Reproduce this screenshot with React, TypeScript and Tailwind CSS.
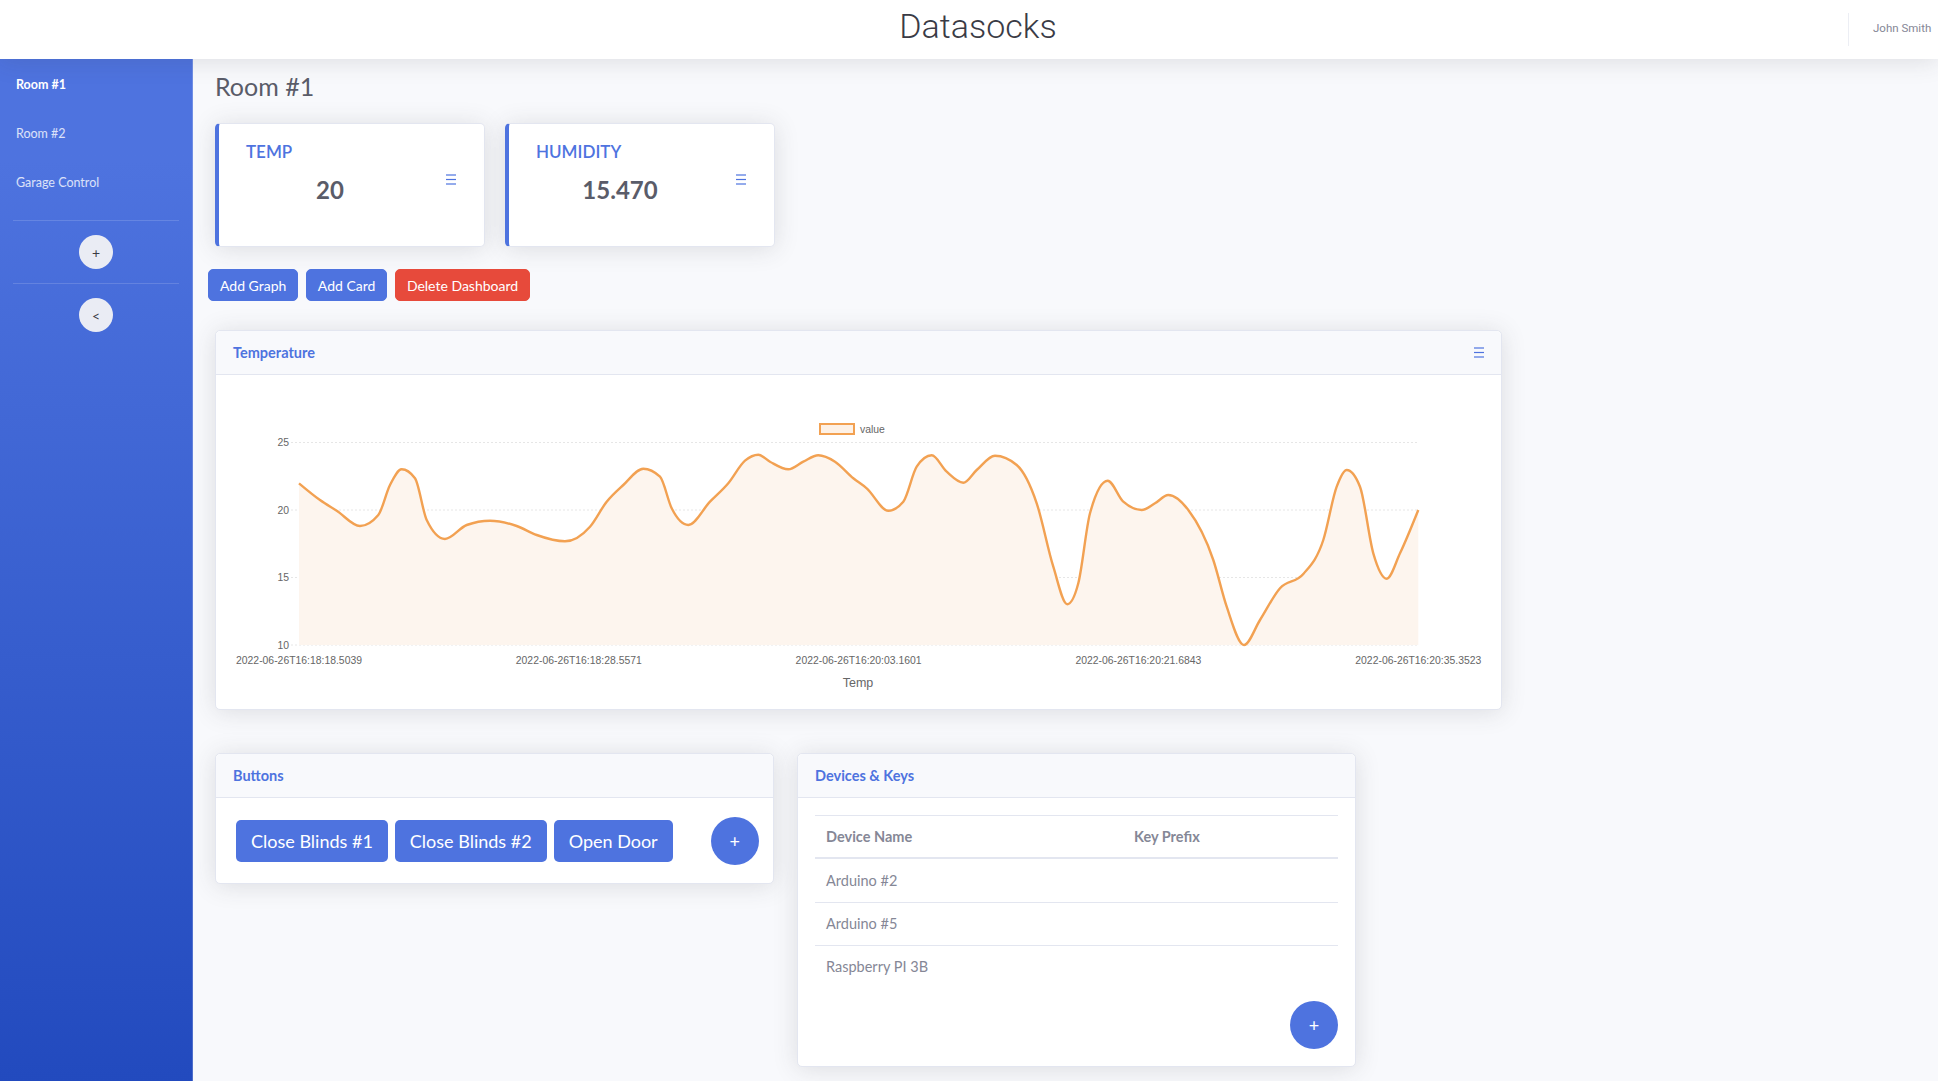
import React from "react";

const pts: [number, number][] = [
  [299, 483.3], [320, 500], [336.7, 510.7], [360, 526], [378.3, 515], [390, 485], [401.7, 469.3], [415, 478.3],
  [426.7, 520], [445, 539], [466.7, 525], [490, 520.7], [516.7, 526], [536.7, 535], [565, 541.3], [590, 526.7],
  [606.7, 501.7], [623.3, 485], [643.3, 468.7], [660, 476.7], [671.7, 508.3], [688.3, 525], [710, 501.7],
  [728.3, 483.3], [745, 460.7], [758.3, 454.7], [770, 461.7], [788.3, 469.3], [803.3, 461.7], [818.3, 455.3],
  [835, 461.7], [853.3, 478.3], [866.7, 488.3], [888.3, 510.7], [903.3, 501.7], [916.7, 466.7], [931.7, 455.3],
  [946.7, 471.7], [963.3, 482.7], [976.7, 470], [995, 455.7], [1016.7, 465], [1036.7, 503.3], [1053.3, 566.7],
  [1067.3, 604.3], [1078.3, 583.3], [1090, 513.3], [1107.7, 480.7], [1123.3, 501.7], [1141.7, 510], [1155, 503.3],
  [1168.3, 495], [1188.3, 510], [1213.3, 560], [1226.7, 606.7], [1244, 645], [1260, 620], [1280, 588.3],
  [1303.3, 574], [1323.3, 540], [1336.7, 486.7], [1346.7, 470], [1360, 486.7], [1373.3, 553.3], [1386.7, 578.7],
  [1400, 553.3], [1418.3, 510],
];

function monotonePath(p: [number, number][]) {
  const n = p.length;
  const t = new Array(n).fill(0);
  for (let i = 1; i < n - 1; i++) {
    const [x0, y0] = p[i - 1];
    const [x1, y1] = p[i];
    const [x2, y2] = p[i + 1];
    const h0 = x1 - x0;
    const h1 = x2 - x1;
    const s0 = (y1 - y0) / h0;
    const s1 = (y2 - y1) / h1;
    const pp = (s0 * h1 + s1 * h0) / (h0 + h1);
    t[i] = (Math.sign(s0) + Math.sign(s1)) * Math.min(Math.abs(s0), Math.abs(s1), 0.5 * Math.abs(pp)) || 0;
  }
  const h = p[1][0] - p[0][0];
  t[0] = (3 * (p[1][1] - p[0][1]) / h - t[1]) / 2;
  const hn = p[n - 1][0] - p[n - 2][0];
  t[n - 1] = (3 * (p[n - 1][1] - p[n - 2][1]) / hn - t[n - 2]) / 2;
  let d = `M${p[0][0]},${p[0][1]}`;
  for (let i = 0; i < n - 1; i++) {
    const [x0, y0] = p[i];
    const [x1, y1] = p[i + 1];
    const dx = (x1 - x0) / 3;
    d += ` C${(x0 + dx).toFixed(2)},${(y0 + dx * t[i]).toFixed(2)} ${(x1 - dx).toFixed(2)},${(y1 - dx * t[i + 1]).toFixed(2)} ${x1},${y1}`;
  }
  return d;
}

const linePath = monotonePath(pts);
const areaPath = `${linePath} L1418.3,645 L299,645 Z`;

function Burger({ className = "" }: { className?: string }) {
  return (
    <svg width="10" height="11" viewBox="0 0 10 11" className={className}>
      <line x1="0" y1="1" x2="10" y2="1" stroke="#4e73df" strokeWidth="1.2" />
      <line x1="0" y1="5.5" x2="10" y2="5.5" stroke="#4e73df" strokeWidth="1.2" />
      <line x1="0" y1="10" x2="10" y2="10" stroke="#4e73df" strokeWidth="1.2" />
    </svg>
  );
}

function StatCard({ title, value }: { title: string; value: string }) {
  return (
    <div className="w-[270px] h-[124px] bg-white rounded-[5px] border border-[#e3e6f0] border-l-4 border-l-[#4e73df] shadow-[0_2px_24px_0_rgba(58,59,69,0.15)] flex pl-[27px]">
      <div className="w-[168px] pt-[18px]">
        <div className="text-[17px] leading-[20px] font-semibold text-[#4e73df]">{title}</div>
        <div className="mt-[13px] text-center text-[24px] leading-[29px] font-bold text-[#5a5c69]">{value}</div>
      </div>
      <div className="ml-[32px] mt-[50px]">
        <Burger />
      </div>
    </div>
  );
}

const xLabels = [
  { x: 299, t: "2022-06-26T16:18:18.5039" },
  { x: 578.8, t: "2022-06-26T16:18:28.5571" },
  { x: 858.6, t: "2022-06-26T16:20:03.1601" },
  { x: 1138.4, t: "2022-06-26T16:20:21.6843" },
  { x: 1418.3, t: "2022-06-26T16:20:35.3523" },
];
const grid = [
  { y: 442.5, t: "25" },
  { y: 510, t: "20" },
  { y: 577.5, t: "15" },
  { y: 645, t: "10" },
];

function Chart() {
  return (
    <svg width="1285" height="334" viewBox="216 375 1285 334" className="block" style={{ fontFamily: "'Liberation Sans', Arial, sans-serif" }}>
      {grid.map((g) => (
        <line key={g.y} x1="291" y1={g.y} x2="1418.3" y2={g.y} stroke="#e6e6e6" strokeWidth="1" strokeDasharray="2 2" />
      ))}
      <path d={areaPath} fill="#fdf5ee" />
      <path d={linePath} fill="none" stroke="#f2a152" strokeWidth="2.4" strokeLinejoin="round" />
      {grid.map((g) => (
        <text key={g.t} x="289" y={g.y + 3.6} textAnchor="end" fontSize="10.4" fill="#666">
          {g.t}
        </text>
      ))}
      {xLabels.map((l) => (
        <text key={l.t} x={l.x} y="664" textAnchor="middle" fontSize="10.4" fill="#666">
          {l.t}
        </text>
      ))}
      <rect x="820" y="424" width="34" height="10" fill="#fdf1e6" stroke="#f2a152" strokeWidth="2" />
      <text x="860" y="432.5" fontSize="10.4" fill="#666">
        value
      </text>
      <text x="858" y="687" textAnchor="middle" fontSize="12.5" fill="#666">
        Temp
      </text>
    </svg>
  );
}

function CardHeader({ title, right }: { title: string; right?: React.ReactNode }) {
  return (
    <div className="h-[44px] bg-[#f8f9fc] border-b border-[#e3e6f0] rounded-t-[5px] flex items-center justify-between px-[17px]">
      <span className="text-[14.5px] font-bold text-[#4e73df]">{title}</span>
      {right}
    </div>
  );
}

const cardCls =
  "bg-white rounded-[5px] border border-[#e3e6f0] shadow-[0_2px_24px_0_rgba(58,59,69,0.15)]";

export default function App() {
  return (
    <div className="min-h-screen w-full bg-[#f8f9fc] flex flex-col font-['Lato','Noto_Sans',sans-serif]">
      <header className="h-[59px] shrink-0 bg-white shadow-[0_2px_24px_0_rgba(58,59,69,0.15)] relative z-10 flex items-center">
        <div className="flex-1 flex justify-center pl-[108px] pb-[8px]">
          <span className="font-['Roboto',sans-serif] font-light text-[34px] leading-none text-[#3a3b45]">Datasocks</span>
        </div>
        <div className="w-px h-[33px] bg-[#eceef4]" />
        <div className="w-[89px] pl-[24px] pb-[2px] font-['Roboto',sans-serif] text-[11.5px] text-[#858796] whitespace-nowrap">
          John Smith
        </div>
      </header>

      <div className="flex flex-1">
        <aside className="w-[193px] shrink-0 bg-linear-to-b from-[#4e73df] from-10% to-[#224abe] border-r border-white/20 flex flex-col pt-[2px]">
          <div className="h-[49px] flex items-center pl-[16px] text-[12.5px] font-bold text-white">Room #1</div>
          <div className="h-[49px] flex items-center pl-[16px] text-[12.5px] text-white/80">Room #2</div>
          <div className="h-[48px] flex items-center pl-[16px] text-[12.5px] text-white/80">Garage Control</div>
          <div className="mx-[13px] mt-[13px] h-px bg-white/15" />
          <div className="mt-[14px] mx-auto w-[34px] h-[34px] rounded-full bg-[#eaecf4] flex items-center justify-center text-[14px] text-[#3a3b45]">
            +
          </div>
          <div className="mx-[13px] mt-[14px] h-px bg-white/15" />
          <div className="mt-[14px] mx-auto w-[34px] h-[34px] rounded-full bg-[#eaecf4] flex items-center justify-center text-[14px] text-[#3a3b45]">
            &lt;
          </div>
        </aside>

        <main className="flex-1 pl-[22px] pt-[12px] pb-[14px]">
          <h1 className="text-[25px] leading-[30px] text-[#5a5c69] font-normal">Room #1</h1>

          <div className="mt-[22px] flex gap-[20px]">
            <StatCard title="TEMP" value="20" />
            <StatCard title="HUMIDITY" value="15.470" />
          </div>

          <div className="mt-[22px] -ml-[7px] flex gap-[7.5px]">
            <button className="h-[32px] px-[11px] rounded-[5px] bg-[#4e73df] border border-[#4e73df] text-white text-[14px]">Add Graph</button>
            <button className="h-[32px] px-[11px] rounded-[5px] bg-[#4e73df] border border-[#4e73df] text-white text-[14px]">Add Card</button>
            <button className="h-[32px] px-[11px] rounded-[5px] bg-[#e74a3b] border border-[#e74a3b] text-white text-[14px]">Delete Dashboard</button>
          </div>

          <div className={`mt-[29px] w-[1287px] ${cardCls}`}>
            <CardHeader title="Temperature" right={<Burger />} />
            <Chart />
          </div>

          <div className="mt-[43px] flex gap-[23px] items-start">
            <div className={`w-[559px] ${cardCls}`}>
              <CardHeader title="Buttons" />
              <div className="pt-[19px] pb-[18px] pl-[20px] flex items-center">
                <div className="flex gap-[7px]">
                  <button className="h-[42px] px-[15px] rounded-[5px] bg-[#4e73df] text-white text-[18px]">Close Blinds #1</button>
                  <button className="h-[42px] px-[15px] rounded-[5px] bg-[#4e73df] text-white text-[18px]">Close Blinds #2</button>
                  <button className="h-[42px] px-[15px] rounded-[5px] bg-[#4e73df] text-white text-[18px]">Open Door</button>
                </div>
                <div className="ml-[38px] w-[48px] h-[48px] rounded-full bg-[#4e73df] flex items-center justify-center text-white text-[18px]">
                  +
                </div>
              </div>
            </div>

            <div className={`w-[559px] ${cardCls}`}>
              <CardHeader title="Devices & Keys" />
              <div className="pt-[17px] px-[17px] pb-[17px]">
                <div className="text-[14.5px] text-[#858796]">
                  <div className="flex h-[44px] border-t border-[#e3e6f0] border-b-2 font-bold items-center">
                    <div className="w-[307px] pl-[11px]">Device Name</div>
                    <div className="pl-[12px]">Key Prefix</div>
                  </div>
                  <div className="flex h-[43px] items-center">
                    <div className="w-[307px] pl-[11px]">Arduino #2</div>
                  </div>
                  <div className="flex h-[43px] border-t border-[#e3e6f0] items-center">
                    <div className="w-[307px] pl-[11px]">Arduino #5</div>
                  </div>
                  <div className="flex h-[43px] border-t border-[#e3e6f0] items-center">
                    <div className="w-[307px] pl-[11px]">Raspberry PI 3B</div>
                  </div>
                </div>
                <div className="mt-[13px] flex justify-end">
                  <div className="w-[48px] h-[48px] rounded-full bg-[#4e73df] flex items-center justify-center text-white text-[18px]">
                    +
                  </div>
                </div>
              </div>
            </div>
          </div>
        </main>
      </div>
    </div>
  );
}
